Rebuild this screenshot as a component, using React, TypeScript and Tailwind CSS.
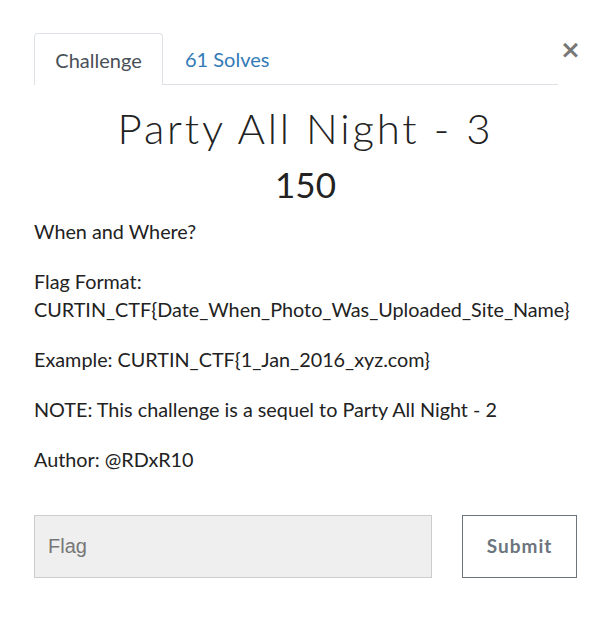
export default function App() {
  return (
    <div className="w-[611px] h-[635px] bg-white relative" style={{ fontFamily: "Lato, 'Noto Sans', sans-serif" }}>
      <button className="absolute left-[560px] top-[37px] text-[25px] leading-none font-bold text-[#777] font-['DejaVu_Sans',sans-serif]">
        ×
      </button>
      <div className="pt-[33px] pl-[34px] pr-[53px]">
        <div className="flex border-b border-[#dee2e6] h-[52px]">
          <div className="w-[129px] border border-b-0 border-[#dee2e6] rounded-t-[4px] bg-white -mb-px flex items-center justify-center text-[20px] text-[#495057]">
            Challenge
          </div>
          <div className="ml-[22px] flex items-center text-[20px] text-[#337ab7]">61 Solves</div>
        </div>
      </div>
      <div className="px-[34px]">
        <h2 className="text-center text-[42px] leading-none font-light tracking-[2.8px] text-[#222] mt-[22px]">
          Party All Night - 3
        </h2>
        <h3 className="text-center text-[35px] leading-none text-[#222] mt-[18px]">150</h3>
        <div className="mt-[15px] text-[19.8px] leading-[28px] text-[#222]">
          <p className="mb-[22px]">When and Where?</p>
          <p className="mb-[22px]">
            Flag Format:
            <br />
            CURTIN_CTF{"{"}Date_When_Photo_Was_Uploaded_Site_Name{"}"}
          </p>
          <p className="mb-[22px]">Example: CURTIN_CTF{"{"}1_Jan_2016_xyz.com{"}"}</p>
          <p className="mb-[22px]">NOTE: This challenge is a sequel to Party All Night - 2</p>
          <p>Author: @RDxR10</p>
        </div>
        <div className="mt-[42px] flex items-center">
          <input
            placeholder="Flag"
            className="w-[398px] h-[63px] bg-[#efefef] border border-[#ccc] px-[13px] text-[20px] placeholder:text-[#777] outline-none font-['Liberation_Sans',sans-serif]"
          />
          <button className="ml-[30px] w-[115px] h-[63px] border border-[#6c757d] text-[19px] font-bold tracking-[1px] text-[#6c757d]">
            Submit
          </button>
        </div>
      </div>
    </div>
  );
}
